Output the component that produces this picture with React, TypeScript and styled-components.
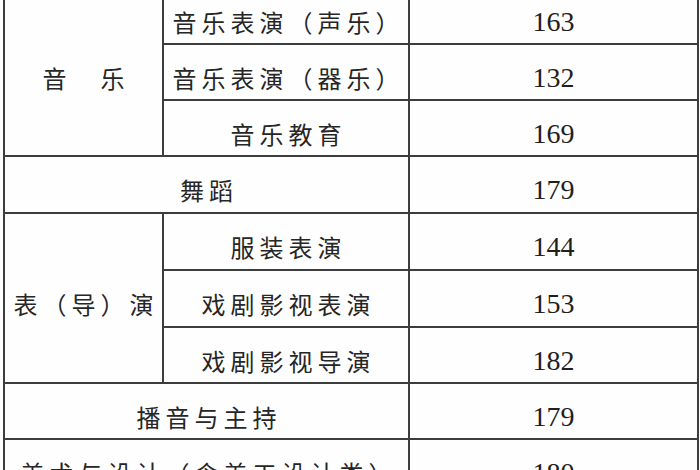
import React from 'react';
import styled, { createGlobalStyle } from 'styled-components';

const GlobalStyle = createGlobalStyle`
  html, body {
    margin: 0;
    padding: 0;
    background: #ffffff;
  }
`;

type Row = {
  group?: string;
  groupSpan?: number;
  name: string;
  wide?: boolean;
  quota: string;
};

const rows: Row[] = [
  { group: '音　乐', groupSpan: 3, name: '音乐表演（声乐）', quota: '163' },
  { name: '音乐表演（器乐）', quota: '132' },
  { name: '音乐教育', quota: '169' },
  { name: '舞蹈', wide: true, quota: '179' },
  { group: '表（导）演', groupSpan: 3, name: '服装表演', quota: '144' },
  { name: '戏剧影视表演', quota: '153' },
  { name: '戏剧影视导演', quota: '182' },
  { name: '播音与主持', wide: true, quota: '179' },
  { name: '美术与设计（含美工设计类）', wide: true, quota: '180' },
];

const Viewport = styled.div`
  width: 700px;
  height: 470px;
  overflow: hidden;
  background: #fefefe;
`;

const Sheet = styled.div`
  display: grid;
  grid-template-columns: 157px 244px 287px;
  grid-template-rows: 54px 54px 54px 55px 55px 55px 54px 54px 54px;
  gap: 2px;
  padding: 2px;
  width: 696px;
  box-sizing: border-box;
  margin: -13px 0 0 3px;
  background: #3d3d3d;
`;

const Cell = styled.div<{ $colSpan?: number; $rowSpan?: number }>`
  grid-column: span ${({ $colSpan }) => $colSpan ?? 1};
  grid-row: span ${({ $rowSpan }) => $rowSpan ?? 1};
  display: flex;
  align-items: center;
  justify-content: center;
  padding-top: 11px;
  box-sizing: border-box;
  background: #fefefe;
`;

const Label = styled.span`
  font-family: "Noto Sans CJK SC", sans-serif;
  font-size: 24px;
  letter-spacing: 5px;
  margin-right: -5px;
  color: #262626;
  line-height: 1;
  white-space: nowrap;
`;

const Quota = styled.span`
  font-family: "Liberation Serif", serif;
  font-size: 28px;
  color: #1f1f1f;
  line-height: 1;
`;

export default function App() {
  return (
    <>
      <GlobalStyle />
      <Viewport>
        <Sheet>
          {rows.map((row) => (
            <React.Fragment key={row.name}>
              {row.group && (
                <Cell $rowSpan={row.groupSpan}>
                  <Label>{row.group}</Label>
                </Cell>
              )}
              <Cell $colSpan={row.wide ? 2 : 1}>
                <Label>{row.name}</Label>
              </Cell>
              <Cell>
                <Quota>{row.quota}</Quota>
              </Cell>
            </React.Fragment>
          ))}
        </Sheet>
      </Viewport>
    </>
  );
}
